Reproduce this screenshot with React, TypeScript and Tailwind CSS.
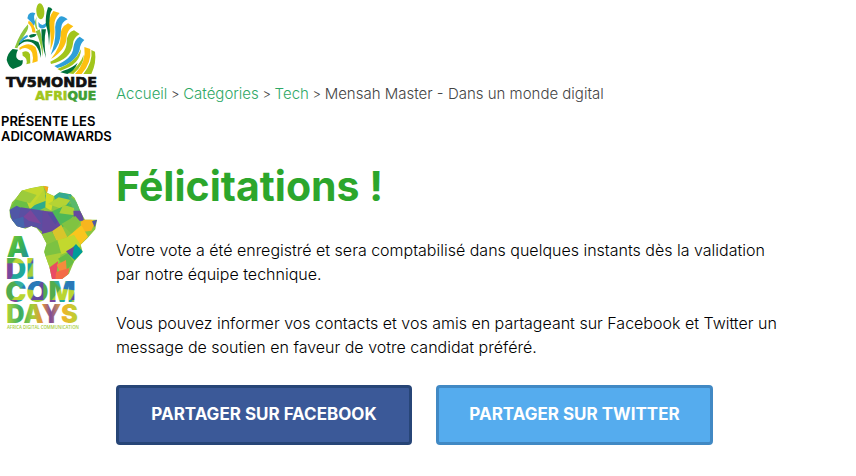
import React from 'react';

const crumbs = ['Accueil', 'Catégories', 'Tech'];

const shareButtons = [
  { label: 'PARTAGER SUR FACEBOOK', style: 'w-[296px] bg-[#3b5998] border-[#274577]' },
  { label: 'PARTAGER SUR TWITTER', style: 'w-[277px] bg-[#55acee] border-[#4189c4]' },
];

function TvMondeLogo() {
  return (
    <svg viewBox="0 0 300 312" className="block w-[100px] h-[104px]" role="img" aria-label="TV5MONDE Afrique">
      {/* head */}
      <path d="M38 147 L54 149 Q46 164 50 174 Q56 184 68 180 Q70 194 60 199 L39 207 Q26 202 20 180 Q22 160 38 147Z" fill="#00723b" />
      <path d="M44 143 Q60 98 84 73 Q87 88 76 101 Q60 122 52 145Z" fill="#8dc63f" />
      <path d="M85 44 Q93 34 106 40 Q98 51 106 66 L102 78 Q94 66 82 55Z" fill="#2e9fd8" />
      <path d="M86 62 Q104 70 107 98 L97 97 Q96 79 84 70Z" fill="#fdc010" />
      <path d="M110 50 Q106 70 114 90 L108 86 Q101 68 110 50Z" fill="#8dc63f" />
      <ellipse cx="121" cy="34" rx="12" ry="24" fill="#a1c51b" transform="rotate(-5 121 34)" />
      <path d="M115 66 Q127 84 140 66 L139 79 Q127 92 116 80Z" fill="#2e9fd8" />
      <path d="M86 108 Q94 99 110 103 Q105 113 92 113Z" fill="#00723b" />
      <path d="M57 130 Q77 108 115 126 Q124 144 123 174 Q113 129 88 125 Q69 121 55 139Z" fill="#00723b" />
      <path d="M57 128 Q66 112 82 104 L84 110 Q72 116 60 130Z" fill="#2e9fd8" />
      <path d="M58 143 Q86 123 106 141 Q114 158 113 184 L97 189 Q104 152 84 146 Q71 141 59 150Z" fill="#fdc010" />
      <path d="M67 157 Q84 149 90 163 L91 190 L79 193 Q84 174 68 167Z" fill="#a1c51b" />
      <path d="M107 94 Q123 128 128 170 Q131 124 119 88Z" fill="#8dc63f" />
      <path d="M124 88 L138 88 Q130 125 138 174 Q124 132 124 88Z" fill="#00723b" />
      {/* mane and back */}
      <path d="M144 22 Q151 20 157 28 Q147 42 150 63 Q151 98 147 137 Q146 98 138 76 Q135 49 144 22Z" fill="#00723b" />
      <path d="M160 33 L179 39 Q162 57 163 76 Q167 116 151 150 Q154 112 149 86 Q144 53 160 33Z" fill="#fdc010" />
      <path d="M179 50 Q187 45 203 58 Q184 66 183 86 Q186 130 152 165 Q167 125 166 95 Q162 66 179 50Z" fill="#2e9fd8" />
      <path d="M204 70 L220 79 Q201 92 200 110 Q199 148 153 177 Q182 142 182 109 Q180 82 204 70Z" fill="#fdc010" />
      <path d="M222 91 L239 102 Q220 113 219 131 Q213 178 153 192 L151 185 Q200 163 200 127 Q200 98 222 91Z" fill="#a1c51b" />
      <path d="M239 110 L253 120 Q240 131 239 149 Q228 188 172 204 L163 198 Q219 175 220 143 Q223 119 239 110Z" fill="#2e9fd8" />
      <path d="M243 148 Q242 193 182 212 L172 207 Q225 189 243 148Z" fill="#a1c51b" />
      <path d="M253 141 L271 147 Q275 188 245 222 L225 222 Q260 184 253 141Z" fill="#fdc010" />
      <path d="M274 150 L285 155 Q290 188 274 222 L250 222 Q279 186 274 150Z" fill="#a1c51b" />
      <path d="M251 164 Q253 193 220 222 L204 220 Q241 195 251 164Z" fill="#a1c51b" />
      <path d="M190 212 Q217 204 233 188 Q223 213 202 222 L181 217Z" fill="#00723b" />
      <g fontFamily="DejaVu Sans" fontWeight="700">
        <text x="18" y="261" fontSize="43" fill="#111111" stroke="#111111" strokeWidth="2">TV5MONDE</text>
        <text x="106" y="299" fontSize="37" strokeWidth="2">
          <tspan fill="#a1c51b" stroke="#a1c51b">AFRI</tspan>
          <tspan fill="#3f9f35" stroke="#3f9f35">QUE</tspan>
        </text>
      </g>
    </svg>
  );
}

function Facets() {
  return (
    <>
      <path d="M28 90L65 30L90 88L62 118Z" fill="#6abf45" />
      <path d="M65 30L130 17L138 62L90 88Z" fill="#c4d82e" />
      <path d="M65 30L44 58L90 70L110 45Z" fill="#9ccb3b" />
      <path d="M90 88L138 44L140 80L112 94Z" fill="#2fab8b" />
      <path d="M96 78L132 28L138 62Z" fill="#b9d432" />
      <path d="M130 17L147 21L142 42Z" fill="#f9a51a" />
      <path d="M28 90L50 77L80 92L62 132L36 124Z" fill="#5057a6" />
      <path d="M62 82L132 92L128 156L108 142L50 144Z" fill="#5a4fa2" />
      <path d="M70 110L92 90L124 132L86 122Z" fill="#7c469b" />
      <path d="M36 120L70 110L74 144L48 142Z" fill="#4565ac" />
      <path d="M138 38L162 48L154 92L136 82Z" fill="#d1dc27" />
      <path d="M162 48L178 37L216 43L204 84L172 76Z" fill="#35aa91" />
      <path d="M144 72L176 52L212 60L188 88Z" fill="#b5d334" />
      <path d="M204 44L232 66L242 96L218 90Z" fill="#58b96a" />
      <path d="M128 92L186 98L180 156L126 162Z" fill="#65499e" />
      <path d="M142 98L186 104L166 134Z" fill="#544ca0" />
      <path d="M156 94L212 70L226 102L186 144Z" fill="#4db857" />
      <path d="M190 74L222 84L224 106L178 100Z" fill="#aad136" />
      <path d="M220 92L244 92L252 122L222 124Z" fill="#654a9f" />
      <path d="M184 132L226 108L242 126L216 162Z" fill="#80c341" />
      <path d="M242 126L264 112L286 126L274 152L246 156Z" fill="#f8b51e" />
      <path d="M276 124L292 119L284 142Z" fill="#5057a6" />
      <path d="M156 154L184 134L202 172L170 184Z" fill="#d9c52b" />
      <path d="M126 162L156 154L170 184L132 200Z" fill="#8cc63f" />
      <path d="M202 172L244 136L264 170L242 194Z" fill="#fac51d" />
      <path d="M170 182L222 164L244 198L182 224Z" fill="#c3d82e" />
      <path d="M132 198L172 180L184 222L136 230Z" fill="#7cc242" />
      <path d="M202 220L228 192L249 215L224 240Z" fill="#009c9a" />
      <path d="M198 214L222 200L217 232Z" fill="#704598" />
      <path d="M136 228L184 218L174 252L145 264Z" fill="#a9cf38" />
      <path d="M174 236L202 220L222 246L200 270Z" fill="#66bd45" />
      <path d="M146 264L174 244L168 298L150 296Z" fill="#e94b63" />
      <path d="M170 254L198 240L200 272L180 276Z" fill="#f58b3c" />
      <path d="M168 276L208 264L202 298H166Z" fill="#f36b46" />
    </>
  );
}

function AdicomLogo() {
  return (
    <svg viewBox="0 0 318 456" className="block w-[106px] h-[152px]" role="img" aria-label="Adicom Days">
      <defs>
        <clipPath id="africa">
          <path d="M28 90L36 67L48 55L65 32L91 25L130 17L145 20L141 38L162 48L178 37L212 43L224 54L235 79L242 96L255 119L291 119L286 148L263 174L242 194L248 216L222 245L207 281L186 297H156L148 260L132 216L140 191L126 164L110 145L94 138L76 146L50 138L30 112Z" />
        </clipPath>
        <pattern id="mosaic" width="120" height="110" patternUnits="userSpaceOnUse" patternTransform="translate(10 30)">
          <rect width="120" height="110" fill="#35b0a0" />
          <path d="M0 0L44 0L24 46L0 58Z" fill="#79479c" />
          <path d="M44 0H88L68 40L24 46Z" fill="#1fa99a" />
          <path d="M88 0H120V42L68 40Z" fill="#a5cf38" />
          <path d="M0 58L24 46L52 76L26 110H0Z" fill="#52ac4e" />
          <path d="M52 76L84 40L120 42L98 82Z" fill="#2979b8" />
          <path d="M26 110L52 76L98 82L82 110Z" fill="#bad532" />
          <path d="M98 82L120 42V110H82Z" fill="#64499e" />
        </pattern>
        <linearGradient id="leaf" x1="0" y1="0" x2="1" y2="1">
          <stop offset="0" stopColor="#a6ce39" />
          <stop offset="0.5" stopColor="#3cb54a" />
          <stop offset="1" stopColor="#1b86b8" />
        </linearGradient>
        <linearGradient id="days" x1="0" x2="1">
          <stop offset="0" stopColor="#b9d532" />
          <stop offset="0.2" stopColor="#36ac67" />
          <stop offset="0.36" stopColor="#a3ce38" />
          <stop offset="0.5" stopColor="#e89539" />
          <stop offset="0.62" stopColor="#7e4b9b" />
          <stop offset="0.78" stopColor="#f2b32a" />
          <stop offset="1" stopColor="#b5d334" />
        </linearGradient>
      </defs>
      <g clipPath="url(#africa)">
        <rect width="318" height="310" fill="#8cc63f" />
        <Facets />
      </g>
      <g fontFamily="Inter" fontWeight="900">
        <text x="20" y="231" fontSize="85" fill="url(#leaf)">A</text>
        <text x="17" y="298" fontSize="85" fill="url(#mosaic)">DI</text>
        <text x="16" y="367" fontSize="85" fill="url(#mosaic)">COM</text>
        <text x="19" y="430" fontSize="76" fill="url(#days)">DAYS</text>
      </g>
      <text x="21" y="448" fontFamily="Open Sans" fontWeight="600" fontSize="13" fill="#a6ce39">
        AFRICA DIGITAL COMMUNICATION
      </text>
    </svg>
  );
}

export default function App() {
  return (
    <div className="flex bg-white font-['Inter',sans-serif] text-black">
      <aside className="w-[116px] shrink-0">
        <TvMondeLogo />
        <p className="mt-[10px] pl-px text-[13px] leading-[15px] font-semibold whitespace-nowrap">
          PRÉSENTE LES
          <br />
          ADICOMAWARDS
        </p>
        <div className="mt-9">
          <AdicomLogo />
        </div>
      </aside>

      <main className="min-w-0 flex-1 pt-[82px] pr-14">
        <nav aria-label="Fil d'Ariane" className="text-[15px] leading-6 font-light text-[#444444]">
          {crumbs.map((crumb) => (
            <React.Fragment key={crumb}>
              <a href="#" className="text-[#2fa866]">{crumb}</a>
              <span className="text-[13px]">{' > '}</span>
            </React.Fragment>
          ))}
          Mensah Master - Dans un monde digital
        </nav>

        <h1 className="mt-14 text-[41px] leading-[48px] font-bold text-[#2ca62c]">Félicitations !</h1>

        <div className="mt-7 space-y-[25px] text-[16px] leading-6 font-light">
          <p>
            Votre vote a été enregistré et sera comptabilisé dans quelques instants dès la validation
            <br />
            par notre équipe technique.
          </p>
          <p>
            Vous pouvez informer vos contacts et vos amis en partageant sur Facebook et Twitter un
            <br />
            message de soutien en faveur de votre candidat préféré.
          </p>
        </div>

        <div className="mt-[26px] flex flex-wrap gap-6">
          {shareButtons.map((button) => (
            <button
              key={button.label}
              type="button"
              className={`h-[60px] rounded-[4px] border-[3px] text-[17px] font-bold text-white cursor-pointer ${button.style}`}
            >
              {button.label}
            </button>
          ))}
        </div>
      </main>
    </div>
  );
}
